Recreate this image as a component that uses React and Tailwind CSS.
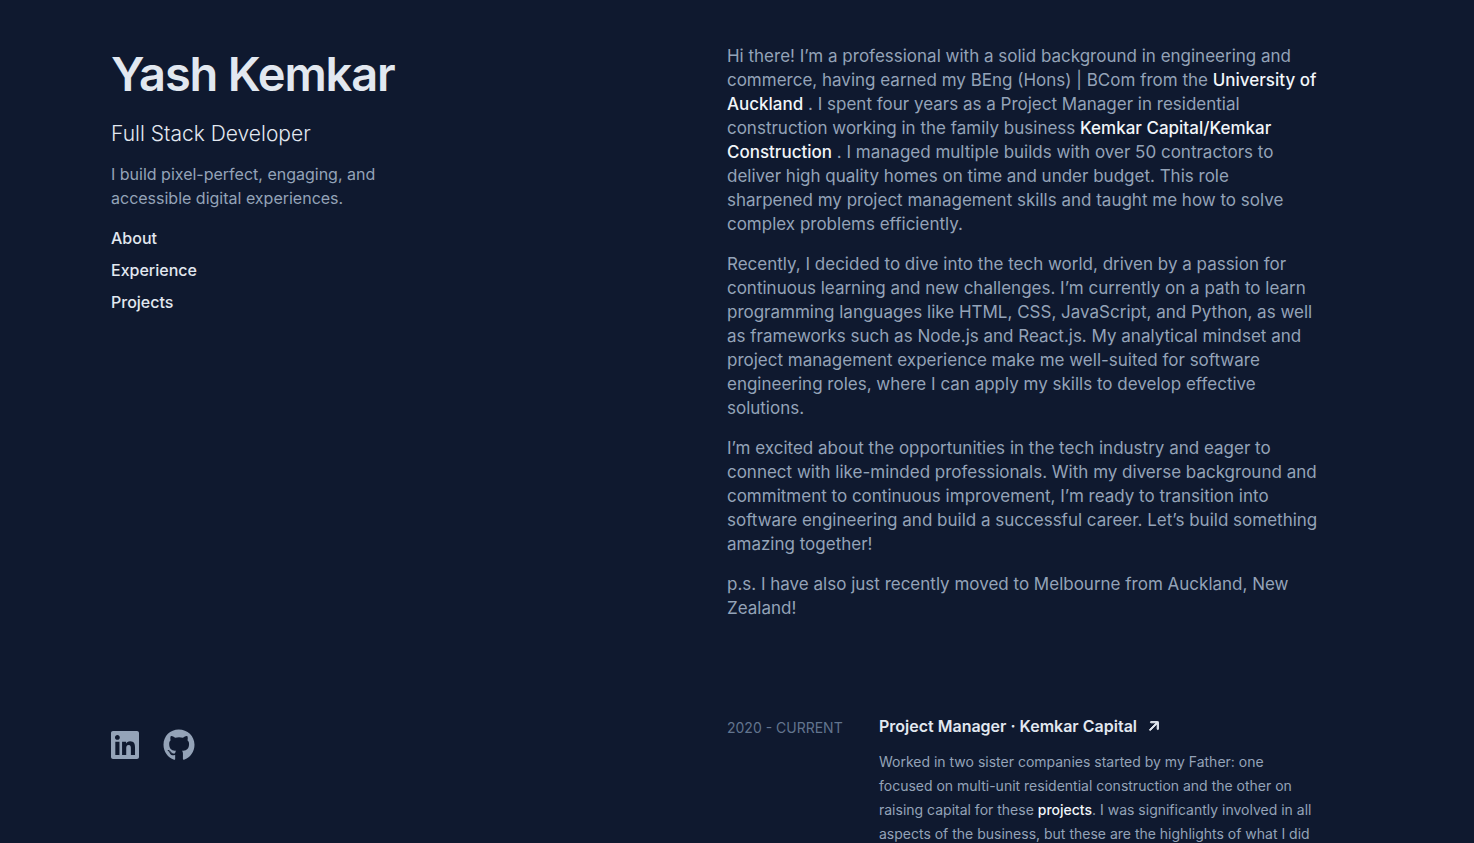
import React from "react";
import { FaLinkedin, FaGithub } from "react-icons/fa";

const about = [
  <>
    Hi there! I’m a professional with a solid background in engineering and commerce, having
    earned my BEng (Hons) | BCom from the <Strong href="#auckland">University of Auckland</Strong> .
    I spent four years as a Project Manager in residential construction working in the family
    business <Strong href="#kemkar">Kemkar Capital/Kemkar Construction</Strong> . I managed
    multiple builds with over 50 contractors to deliver high quality homes on time and under
    budget. This role sharpened my project management skills and taught me how to solve complex
    problems efficiently.
  </>,
  <>
    Recently, I decided to dive into the tech world, driven by a passion for continuous learning
    and new challenges. I’m currently on a path to learn programming languages like HTML, CSS,
    JavaScript, and Python, as well as frameworks such as Node.js and React.js. My analytical
    mindset and project management experience make me well-suited for software engineering roles,
    where I can apply my skills to develop effective solutions.
  </>,
  <>
    I’m excited about the opportunities in the tech industry and eager to connect with like-minded
    professionals. With my diverse background and commitment to continuous improvement, I’m ready
    to transition into software engineering and build a successful career. Let’s build something
    amazing together!
  </>,
  <>p.s. I have also just recently moved to Melbourne from Auckland, New Zealand!</>,
];

function Strong({ href, children }) {
  return (
    <a href={href} className="font-medium text-slate-100">
      {children}
    </a>
  );
}

function ArrowIcon() {
  return (
    <svg
      viewBox="0 0 20 20"
      fill="currentColor"
      stroke="currentColor"
      strokeWidth="1"
      className="h-[18px] w-[18px]"
      aria-hidden="true"
    >
      <path
        fillRule="evenodd"
        clipRule="evenodd"
        d="M5.22 14.78a.75.75 0 001.06 0l7.22-7.22v5.69a.75.75 0 001.5 0v-7.5a.75.75 0 00-.75-.75h-7.5a.75.75 0 000 1.5h5.69l-7.22 7.22a.75.75 0 000 1.06z"
      />
    </svg>
  );
}

export default function App() {
  return (
    <div className="h-screen overflow-hidden bg-[#0f192f] px-[111px] font-['Inter',sans-serif] text-[#94a3b8]">
      <div className="flex h-full">
        <header className="flex h-full w-[49.2%] flex-col justify-between pt-[50px] pb-[82px]">
          <div>
            <h1 className="text-[47px] leading-12 font-semibold tracking-tight text-slate-200">
              Yash Kemkar
            </h1>
            <h2 className="mt-[22px] text-[21px] leading-7 font-light text-slate-200">
              Full Stack Developer
            </h2>
            <p className="mt-[14px] max-w-xs leading-6">
              I build pixel-perfect, engaging, and accessible digital experiences.
            </p>
            <nav className="mt-4 flex flex-col items-start gap-2 font-medium text-slate-200">
              <a href="#about">About</a>
              <a href="#experience">Experience</a>
              <a href="#projects">Projects</a>
            </nav>
          </div>
          <div className="flex items-center gap-6">
            <a href="#linkedin" aria-label="LinkedIn">
              <FaLinkedin className="h-8 w-7" />
            </a>
            <a href="#github" aria-label="GitHub">
              <FaGithub className="h-8 w-8" />
            </a>
          </div>
        </header>
        <main className="flex-1 pt-11">
          <section id="about" className="flex max-w-148 flex-col gap-4 text-[17px] leading-6">
            {about.map((text, i) => (
              <p key={i}>{text}</p>
            ))}
          </section>
          <section id="experience" className="mt-[94px] flex max-w-148">
            <p className="w-38 shrink-0 pt-0.5 text-sm leading-6 text-slate-500">2020 - CURRENT</p>
            <div>
              <h3 className="flex items-center gap-2 leading-6 font-semibold text-slate-200">
                Project Manager · Kemkar Capital
                <ArrowIcon />
              </h3>
              <p className="mt-3 text-sm leading-6">
                Worked in two sister companies started by my Father: one focused on multi-unit
                residential construction and the other on raising capital for these{" "}
                <Strong href="#projects">projects</Strong>. I was significantly involved in all
                aspects of the business, but these are the highlights of what I did
              </p>
            </div>
          </section>
        </main>
      </div>
    </div>
  );
}
